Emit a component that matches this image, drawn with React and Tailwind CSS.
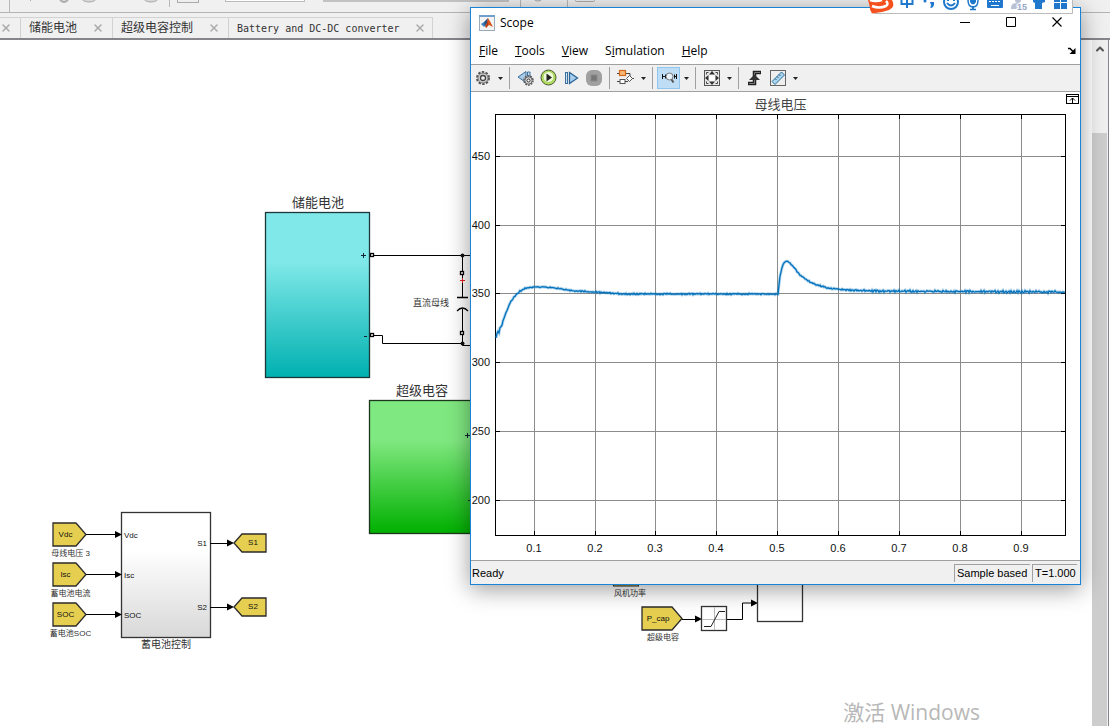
import { X, ChevronUp } from 'lucide-react';

const cjk = 'font-["Liberation_Sans","Noto_Sans_CJK_SC",sans-serif]';

const xTicks = [
    ['0.1', 63], ['0.2', 124], ['0.3', 184], ['0.4', 245], ['0.5', 306],
    ['0.6', 367], ['0.7', 428], ['0.8', 489], ['0.9', 550],
];
const yTicks = [
    ['450', 64], ['400', 133], ['350', 201], ['300', 270], ['250', 339], ['200', 408],
];

// Bus voltage key points, in plot coordinates
const keyPoints = [
    [25, 244], [27, 241], [30, 235], [34, 223], [39, 211], [44, 204], [49, 199], [55, 196],
    [62, 195], [72, 195], [84, 196], [104, 199], [123, 200], [154, 202], [245, 202], [307, 202],
    [309, 184], [312, 172], [315, 169], [318, 170], [321, 173], [329, 183], [337, 189],
    [346, 193], [357, 196], [374, 198], [399, 199], [594, 200],
];

function buildTrace() {
    const pts = [];
    for (let i = 0; i < keyPoints.length - 1; i++) {
        const [x0, y0] = keyPoints[i];
        const [x1, y1] = keyPoints[i + 1];
        // ripple is strongest at start-up and after the load step
        const amp = x0 < 34 ? 2.4 : x0 >= 374 ? 1.3 : 0.8;
        for (let x = x0; x < x1; x++) {
            const ripple = amp * (Math.sin(x * 2.3) * 0.5 + Math.sin(x * x * 5.1) * 0.4);
            pts.push(`${x},${(y0 + ((y1 - y0) * (x - x0)) / (x1 - x0) + ripple).toFixed(1)}`);
        }
    }
    pts.push('594,200');
    return pts.join(' ');
}

const trace = buildTrace();

function Tab({ title, className, latin }) {
    return (
        <div className={`flex items-center justify-between border-t border-r border-[#d2d2d2] ${className}`}>
            {title && (
                <button className={`text-[#333] whitespace-nowrap ${latin ? 'font-["DejaVu_Sans_Mono",monospace] text-[10px]' : `${cjk} text-xs`}`}>
                    {title}
                </button>
            )}
            <button aria-label="Close tab" className="text-[#aaa]">
                <X size={12} strokeWidth={3} />
            </button>
        </div>
    );
}

function Backdrop() {
    return (
        <>
            <header className="h-[13px] shrink-0 border-b border-[#b4b4b4] overflow-hidden">
                <svg width="620" height="12" className="block">
                    <path d="M9.5 0v12M169.5 0v7M520.5 0v10M567.5 0v10" stroke="#b8b8b8" />
                    <path d="M30.500 0v1" stroke="#aaa" />
                    <circle cx="64" cy="-2" r="4" fill="#ddd" stroke="#aaa" strokeWidth="2" />
                    <ellipse cx="89" cy="-3" rx="8" ry="5" fill="#d8d8d8" stroke="#aaa" />
                    <ellipse cx="151" cy="-3" rx="8" ry="5" fill="#d8d8d8" stroke="#aaa" />
                    <ellipse cx="538" cy="-3" rx="5" ry="4" fill="#d8d8d8" stroke="#aaa" />
                    <rect x="177.500" y="-6.500" width="21" height="9" fill="#eee" stroke="#aaa" />
                    <rect x="225.500" y="-6.500" width="79" height="8" fill="#fff" stroke="#bbb" />
                    <rect x="323" y="-6" width="186" height="8" fill="#c2c2c2" />
                    <rect x="575.500" y="-6.500" width="19" height="8" rx="1" fill="#eee" stroke="#aaa" />
                </svg>
            </header>
            <nav className="h-[27px] shrink-0 flex pt-1 border-b-2 border-[#85858b]">
                <Tab className="w-[21px]" />
                <Tab title="储能电池" className="w-[92px] pl-2 pr-2" />
                <Tab title="超级电容控制" className="w-[116px] pl-2 pr-2" />
                <Tab title="Battery and DC-DC converter" latin className="w-[204px] pl-2 pr-1.5" />
            </nav>
        </>
    );
}

function Arrow({ x, y }) {
    return <path d={`M${x} ${y}l-7 -3.500v7z`} fill="#000" />;
}

function FromTag({ x, y, w, label, caption }) {
    return (
        <g>
            <path d={`M${x} ${y}h${w - 10}l10 11.500l-10 11.500h-${w - 10}z`} fill="#e6cf50" stroke="#2b2b2b" strokeWidth="1.300" />
            <text x={x + (w - 8) / 2} y={y + 14} fontSize="8" textAnchor="middle">{label}</text>
            <text x={x + w / 2 + 1} y={y + 33} fontSize="8" textAnchor="middle" fill="#333">{caption}</text>
        </g>
    );
}

function GotoTag({ x, y, label }) {
    return (
        <g>
            <path d={`M${x} ${y}l8 -9h24v18h-24z`} fill="#e6cf50" stroke="#2b2b2b" strokeWidth="1.300" />
            <text x={x + 19} y={y + 2} fontSize="8" textAnchor="middle">{label}</text>
        </g>
    );
}

function Model() {
    return (
        <svg className={`flex-1 min-w-0 ${cjk}`} fill="#111">
            <defs>
                <linearGradient id="battery" x2="0" y2="1">
                    <stop offset="0.3" stopColor="#80e8e8" />
                    <stop offset="1" stopColor="#00b0b0" />
                </linearGradient>
                <linearGradient id="cap" x2="0" y2="1">
                    <stop offset="0.3" stopColor="#80e880" />
                    <stop offset="1" stopColor="#00b000" />
                </linearGradient>
                <linearGradient id="control" x2="0" y2="1">
                    <stop offset="0.3" stopColor="#fff" />
                    <stop offset="1" stopColor="#d8d8d8" />
                </linearGradient>
            </defs>
            <g transform="translate(0 -40)">
                {/* Battery and DC bus */}
                <text x="318" y="207" fontSize="13" textAnchor="middle" fill="#333">储能电池</text>
                <rect x="265.500" y="212.500" width="104" height="165" fill="url(#battery)" stroke="#1c3838" strokeWidth="1.300" />
                <path d="M361 255.500h5M363.500 253v5M364 336.500h3" stroke="#123" fill="none" />
                <path d="M374 255.500h100M374 335.500h8.500v8h80v2h10M462.500 255v16M462.500 274v23M462.500 309v22M462.500 334v10" stroke="#000" fill="none" />
                <path d="M457 297.500h11M457 311q5.500 -6 11 0" stroke="#000" strokeWidth="1.300" fill="none" />
                <path d="M460 280.500h5M462.500 278v5" stroke="#e02020" />
                <g fill="#fff" stroke="#000" strokeWidth="1.300">
                    <rect x="370.500" y="253.500" width="3" height="3" />
                    <rect x="370.500" y="333.500" width="3" height="3" />
                    <rect x="460.500" y="271.500" width="3" height="3" />
                    <rect x="460.500" y="331.500" width="3" height="3" />
                </g>
                <circle cx="462.500" cy="255.500" r="2" />
                <circle cx="462.500" cy="343.500" r="2" />
                <text x="413" y="306" fontSize="9" fill="#333">直流母线</text>

                {/* Supercapacitor */}
                <text x="422" y="395" fontSize="13" textAnchor="middle" fill="#333">超级电容</text>
                <rect x="369.500" y="400.500" width="120" height="133" fill="url(#cap)" stroke="#1c381c" strokeWidth="1.300" />
                <path d="M465 435.500h5M467.500 433v5M468 500.500h3" stroke="#123" />

                {/* Battery control */}
                <rect x="121.500" y="512.500" width="89" height="125" fill="url(#control)" stroke="#333" strokeWidth="1.300" />
                <text x="166" y="648" fontSize="10" textAnchor="middle" fill="#333">蓄电池控制</text>
                <FromTag x={53} y={523} w={33} label="Vdc" caption="母线电压 3" />
                <FromTag x={53} y={563} w={33} label="Isc" caption="蓄电池电流" />
                <FromTag x={53} y={603} w={33} label="SOC" caption="蓄电池SOC" />
                <path d="M86 534.500h30M86 574.500h30M86 614.500h30M210 543.500h18M210 607.500h18" stroke="#000" />
                <Arrow x={122} y={534.5} />
                <Arrow x={122} y={574.5} />
                <Arrow x={122} y={614.5} />
                <Arrow x={234} y={543} />
                <Arrow x={234} y={607} />
                <g fontSize="8">
                    <text x="124" y="538">Vdc</text>
                    <text x="124" y="578">Isc</text>
                    <text x="124" y="618">SOC</text>
                    <text x="207" y="546" textAnchor="end">S1</text>
                    <text x="207" y="610" textAnchor="end">S2</text>
                </g>
                <GotoTag x={234} y={543} label="S1" />
                <GotoTag x={234} y={607} label="S2" />

                {/* Power branch */}
                <rect x="613.500" y="570" width="25" height="16" fill="#e6cf50" stroke="#2b2b2b" />
                <text x="630" y="596" fontSize="8" textAnchor="middle" fill="#333">风机功率</text>
                <FromTag x={642} y={607} w={40} label="P_cap" caption="超级电容" />
                <path d="M682 619.500h14M727 619.500h15.500v-16.500h9" stroke="#000" fill="none" />
                <Arrow x={702} y={619} />
                <Arrow x={758} y={603} />
                <rect x="701.500" y="606.500" width="25" height="24" fill="#fff" stroke="#333" strokeWidth="1.300" />
                <path d="M714.500 607v23M702 619.500h24" stroke="#bbb" />
                <path d="M704 626.500h7l8 -15h6" stroke="#222" fill="none" />
                <rect x="757.500" y="570.500" width="45" height="51" fill="#fff" stroke="#333" strokeWidth="1.300" />
            </g>
        </svg>
    );
}

function Scrollbar() {
    return (
        <aside className="w-[17px] shrink-0 flex flex-col bg-[#f0f0f0] border-r border-[#85858b] pr-px mr-px">
            <button aria-label="Scroll up" className="h-[93px] shrink-0 flex justify-center pt-[3px] text-[#555]">
                <ChevronUp size={12} strokeWidth={4} />
            </button>
            <div className="flex-1 bg-[#cdcdcd]" />
        </aside>
    );
}

function Tool({ label, active, children }) {
    return (
        <button aria-label={label} className={`w-[23px] h-[22px] flex items-center justify-center ${active ? 'bg-[#bfddf5] border border-[#8fc6f0]' : ''}`}>
            <svg width="18" height="18" viewBox="0 0 18 18" fill="none" className="shrink-0">{children}</svg>
        </button>
    );
}

function Caret() {
    return (
        <button aria-label="More options" className="w-3 h-[22px] flex items-center justify-center">
            <svg width="5" height="3"><path d="M0 0h5l-2.500 3z" fill="#222" /></svg>
        </button>
    );
}

function Sep() {
    return <div className="w-px h-[22px] ml-[3px] mr-1 bg-[#a0a0a0]" />;
}

function Toolbar() {
    return (
        <div className="h-7 flex items-center bg-[#f0f0f0] border-y border-[#a0a0a0]">
            <Tool label="Configuration">
                <circle cx="9" cy="9" r="6" stroke="#555" strokeWidth="2" strokeDasharray="2.400 1.370" />
                <circle cx="9" cy="9" r="5" fill="#d0d0d0" stroke="#777" />
                <circle cx="9" cy="9" r="2.500" fill="#f4f4f4" stroke="#444" strokeWidth="1.300" />
            </Tool>
            <Caret />
            <Sep />
            <Tool label="Step back">
                <path d="M1 8l8 -5.500v11z" fill="#a9cbe6" stroke="#3a6f9d" />
                <path d="M10.500 3h2.500v4h-2.500z" fill="#c9e1f3" stroke="#3a6f9d" />
                <circle cx="11.500" cy="11.500" r="4.500" stroke="#555" strokeWidth="1.500" strokeDasharray="1.800 1" />
                <circle cx="11.500" cy="11.500" r="3.700" fill="#d4d4d4" stroke="#666" />
                <circle cx="11.500" cy="11.500" r="1.500" fill="#fff" stroke="#333" />
            </Tool>
            <Tool label="Run">
                <circle cx="8.500" cy="8.500" r="7.500" fill="#b2dd5c" stroke="#4a5a35" />
                <circle cx="8.500" cy="8" r="5.500" fill="#eefad8" stroke="#a5d660" />
                <path d="M6.500 4.500v8l5.500 -4z" fill="#222" />
            </Tool>
            <Tool label="Step forward">
                <rect x="2.500" y="3.500" width="2" height="11" fill="#c9e1f3" stroke="#3a6f9d" />
                <path d="M6.500 3.500v11l8 -5.500z" fill="#a9cfee" stroke="#2d6496" strokeWidth="1.300" />
            </Tool>
            <Tool label="Stop">
                <rect x="0" y="1" width="16" height="16" rx="6" fill="#a0a0a0" />
                <rect x="5" y="6" width="6" height="6" fill="#777" stroke="#8a8a8a" />
            </Tool>
            <Sep />
            <Tool label="Highlight block">
                <path d="M0 4.500h3M9 4.500h4v5M0 12.500h3M8 12.500h2M15 9.500h2" stroke="#444" />
                <rect x="2.500" y="1.500" width="6" height="5" fill="#f9b877" stroke="#d2691e" strokeWidth="1.200" />
                <rect x="3" y="10.500" width="5" height="4" fill="#fff" stroke="#555" />
                <path d="M9.500 9.500l3 -3l3 3l-3 3z" fill="#fff" stroke="#555" />
                <path d="M8 12.500h3" stroke="#444" />
            </Tool>
            <Caret />
            <Sep />
            <Tool label="Zoom X" active>
                <path d="M2.500 5v5M3 7.500h2M5.500 5.500v4M16.500 5v5M15 7.500h1M14.500 5.500v4" stroke="#111" />
                <circle cx="9.500" cy="7.500" r="3.500" fill="#e8f2fa" stroke="#777" />
                <path d="M11.500 10.500l2 3" stroke="#555" strokeWidth="2" />
            </Tool>
            <Caret />
            <Sep />
            <Tool label="Fit to view">
                <rect x="1.500" y="1.500" width="15" height="15" fill="#e8e8e8" stroke="#555" />
                <path d="M9 2l3 3.500h-6zM9 16l3 -3.500h-6zM2 9l3.500 -3v6zM16 9l-3.500 -3v6z" fill="#333" />
                <path d="M3.500 3.500h2M3.500 3.500v2M14.500 3.500h-2M14.500 3.500v2M3.500 14.500h2M3.500 14.500v-2M14.500 14.500h-2M14.500 14.500v-2" stroke="#444" />
                <circle cx="9" cy="9" r="3" fill="#fff" />
            </Tool>
            <Caret />
            <Sep />
            <Tool label="Triggers">
                <path d="M2 14.500h6.500v-11h6.500" stroke="#222" strokeWidth="3.500" />
                <path d="M3 14.500h5.500v-11h5.500" stroke="#777" />
                <path d="M3 11l5.500 -5.500l5.500 5.500z" fill="#333" />
            </Tool>
            <Tool label="Measurements">
                <rect x="1.500" y="1.500" width="15" height="15" fill="#eee" stroke="#666" />
                <path d="M3 12.500l9.500 -9.500l3 3l-9.500 9.500z" fill="#a9d5ee" stroke="#2d6f9b" />
                <path d="M6 9.500l1.500 1.500M8 7.500l1.500 1.500M10 5.500l1.500 1.500" stroke="#2d5f85" />
            </Tool>
            <Caret />
        </div>
    );
}

function Plot() {
    return (
        <svg viewBox="0 0 609 468" className={`block w-full ${cjk}`}>
            <text x="309.500" y="17" fontSize="13" textAnchor="middle" fill="#444">母线电压</text>
            <g shapeRendering="crispEdges" stroke="#8c8c8c">
                {xTicks.map(([label, x]) => <path key={label} d={`M${x + 0.5} 23v420`} />)}
                {yTicks.map(([label, y]) => <path key={label} d={`M25 ${y + 0.5}h569`} />)}
            </g>
            <g shapeRendering="crispEdges" stroke="#000" fill="none">
                <rect x="24.500" y="22.500" width="570" height="421" />
                {xTicks.map(([label, x]) => <path key={label} d={`M${x + 0.5} 23v4M${x + 0.5} 443v-4`} />)}
                {yTicks.map(([label, y]) => <path key={label} d={`M25 ${y + 0.5}h4M594 ${y + 0.5}h-4`} />)}
            </g>
            <polyline points={trace} fill="none" stroke="#0072bd" strokeOpacity="0.3" strokeWidth="3" />
            <polyline points={trace} fill="none" stroke="#0072bd" strokeWidth="1.300" />
            <g fontSize="11" fill="#111">
                {xTicks.map(([label, x]) => <text key={label} x={x} y="460" textAnchor="middle">{label}</text>)}
                {yTicks.map(([label, y]) => <text key={label} x="19" y={y + 4} textAnchor="end">{label}</text>)}
            </g>
            {/* Maximize axes button */}
            <g fill="none" stroke="#000">
                <rect x="595.500" y="2.500" width="12" height="9" />
                <path d="M596 4.500h11M601.500 11v-5M599 8.500l2.500 -2.500l2.500 2.500" />
            </g>
        </svg>
    );
}

function ScopeWindow() {
    const menus = ['File', 'Tools', 'View', 'Simulation', 'Help'];
    return (
        <section className='absolute left-[470px] right-[29px] top-[7px] bg-white border border-[#1883d7] shadow-[0_4px_22px_rgba(0,0,0,0.4)] font-["Open_Sans",sans-serif] text-xs text-black'>
            <div className="h-[29px] flex items-center pl-2">
                <svg width="16" height="16" viewBox="0 0 16 16">
                    <rect x=".5" y=".5" width="15" height="15" fill="#f4f4f4" stroke="#9ab" />
                    <path d="M0 0h16v2h-16z" fill="#6f9fca" />
                    <path d="M2 9l3 -2l2 3l-2 2z" fill="#3c80bd" />
                    <path d="M5 7l4 -4l-1 6l-2 2z" fill="#274f83" />
                    <path d="M9 3q2 3 5 9l-4 -2l-3 3l-1 -2q2 -2 3 -8z" fill="#d9541a" />
                    <path d="M9 3l-1 6l-1 4q1 -1 1.500 -3z" fill="#8b2215" />
                </svg>
                <h1 className="ml-[5px]">Scope</h1>
                <div className="ml-auto flex">
                    <button aria-label="Minimize" className="w-[46px] flex justify-center">
                        <svg width="11" height="11"><path d="M0 5.500h10" stroke="#000" /></svg>
                    </button>
                    <button aria-label="Maximize" className="w-[46px] flex justify-center">
                        <svg width="11" height="11"><path d="M.5 .5h9v9h-9z" fill="none" stroke="#000" /></svg>
                    </button>
                    <button aria-label="Close" className="w-[46px] flex justify-center">
                        <svg width="11" height="11"><path d="M.5 .5l9 9M9.500 .5l-9 9" stroke="#000" strokeWidth="1.200" /></svg>
                    </button>
                </div>
            </div>
            <nav className="h-[27px] flex items-center gap-[17px] pl-2 pr-1">
                {menus.map((m) => (
                    <button key={m}>
                        {m === 'Simulation' ? <>S<u>i</u>mulation</> : <><u>{m[0]}</u>{m.slice(1)}</>}
                    </button>
                ))}
                <button aria-label="Dock" className="ml-auto">
                    <svg width="8" height="7" fill="none"><path d="M0 1.500h2l4 4" stroke="#000" strokeWidth="1.500" /><path d="M7.500 1v6h-6z" fill="#000" /></svg>
                </button>
            </nav>
            <Toolbar />
            <Plot />
            <footer className='h-6 flex items-center gap-0.5 bg-[#f0f0f0] border-t border-[#a0a0a0] pt-px pl-px pr-[3px] font-["Liberation_Sans",sans-serif] text-[11px]'>
                <span>Ready</span>
                <span className="ml-auto h-[18px] px-0.5 w-[76px] border-t border-l border-[#a0a0a0] leading-4">Sample based</span>
                <span className="h-[18px] px-0.5 w-[45px] border-t border-l border-[#a0a0a0] leading-4">T=1.000</span>
            </footer>
        </section>
    );
}

function InputBar() {
    return (
        <div className="absolute right-[37px] top-0 w-[205px] h-[14px] overflow-hidden">
            <svg width="205" height="14" fill="#1f78cc">
                <path d="M6 0h199v13.500h-199z" fill="#fff" />
                <path d="M6 13.500h198.500v-13.500" fill="none" stroke="#bbb" />
                <path d="M0 0h24q4 7 -3 10q-8 3 -17 3.500l-2 -4q0 -3 -2 -9.500z" fill="#f4511e" />
                <path d="M4 6q7 3 14 0q3 -2 0 -5M2 0q6 2 12 0" fill="none" stroke="#fff" strokeWidth="2.500" />
                <path d="M33.500 -3h11v7h-11zM39 -4v12" fill="none" stroke="#1f78cc" strokeWidth="2" />
                <circle cx="57" cy="1" r="1.500" />
                <path d="M62 2h4v2q0 3 -3 4l-1 -1q2 -1 1 -2z" />
                <circle cx="83" cy="2" r="7" fill="none" stroke="#1f78cc" strokeWidth="2" />
                <path d="M79 3q4 5 8 0M80 0v1M86 0v1" fill="none" stroke="#1f78cc" strokeWidth="2" />
                <path d="M102 0h6v2q-3 5 -6 0zM104 6h2v4h-2z" />
                <path d="M100 0q0 7 5 7t5 -7M102 9.500h6" fill="none" stroke="#1f78cc" strokeWidth="1.500" />
                <rect x="119" y="-4" width="16" height="12" rx="1" />
                <path d="M121 1.500h12M121 -.5h12" stroke="#fff" strokeDasharray="2 1" />
                <path d="M123 5.500h8" stroke="#fff" />
                <circle cx="150" cy="0" r="3" fill="#b9c2d4" />
                <path d="M143 8q0 -5 6 -5h4v6h-10z" fill="#b9c2d4" />
                <text x="149" y="10" fontSize="9" fontWeight="bold" fill="#98a7c8" stroke="#fff" strokeWidth="2" paintOrder="stroke" className='font-["Liberation_Sans",sans-serif]'>15</text>
                <path d="M165 0h12v2l-3 1v6h-7v-6l-2 -1z" />
                <path d="M186 0h6v2h-6zM193 -1h6v3h-6zM186 3h6v6h-6zM193 3h6v6h-6z" />
            </svg>
        </div>
    );
}

export default function App() {
    return (
        <div className="relative h-screen flex flex-col overflow-hidden bg-[#f0f0f0]">
            <Backdrop />
            <main className="flex-1 min-h-0 flex bg-white">
                <Model />
                <Scrollbar />
            </main>
            <ScopeWindow />
            <InputBar />
            <p className='absolute right-[130px] bottom-0 text-[21px] leading-7 text-[#b8b8b8] font-["Open_Sans","Noto_Sans_CJK_SC",sans-serif]'>
                激活 Windows
            </p>
        </div>
    );
}
